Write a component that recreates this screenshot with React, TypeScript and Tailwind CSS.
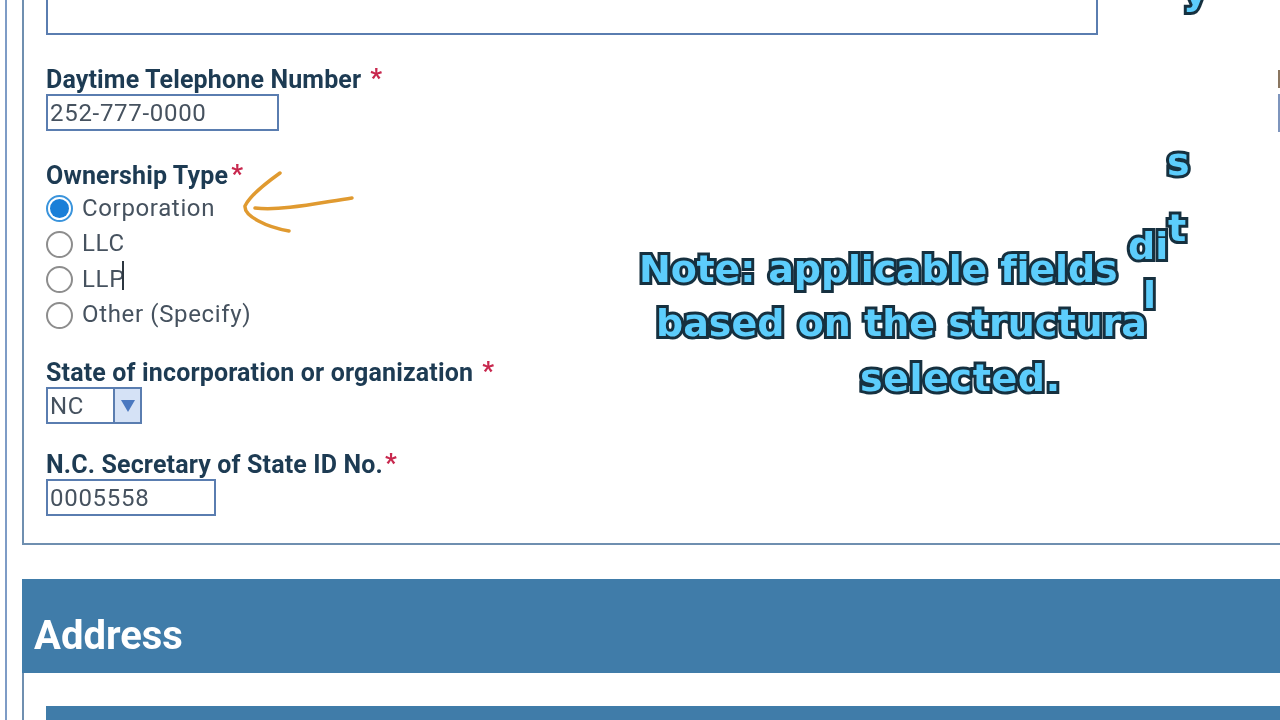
const label = "font-['Roboto',sans-serif] font-bold text-[25px] tracking-[0.15px] leading-[30px] text-[#1d3b53] whitespace-nowrap";
const labelRow = "flex h-[29px]";
const star = "font-['Roboto',sans-serif] font-bold text-[26px] leading-[26px] text-[#c8284e]";
const field = "flex h-[37px] items-center border-2 border-[#5a7db0] bg-white font-['Roboto',sans-serif] text-[24px] tracking-[0.7px] text-[#46525f]";
const overlay =
  "absolute whitespace-nowrap font-['DejaVu_Sans',sans-serif] font-bold text-[38px] leading-none text-[#5ccdfc] [-webkit-text-stroke:6px_#16303f] [paint-order:stroke_fill]";

function Radio({ text, checked, caret }: { text: string; checked?: boolean; caret?: boolean }) {
  return (
    <div className="flex h-[35.5px] items-center gap-[9px]">
      {checked ? (
        <span className="flex h-[27px] w-[27px] items-center justify-center rounded-full border-2 border-[#3a94dc] bg-white">
          <span className="h-[19px] w-[19px] rounded-full bg-[#1a7fd8]" />
        </span>
      ) : (
        <span className="h-[27px] w-[27px] rounded-full border-2 border-[#8d8d8d] bg-white" />
      )}
      <span className="relative pb-[2px] font-['Roboto',sans-serif] text-[24px] tracking-[0.65px] text-[#46525f]">
        {text}
        {caret && <span className="absolute right-[1px] top-[0px] h-[29px] w-[2px] bg-[#2c3640]" />}
      </span>
    </div>
  );
}

export default function App() {
  return (
    <div className="relative h-[720px] w-[1280px] overflow-hidden bg-white blur-[0.4px]">
      <div className="ml-[5px] h-[720px] w-[1300px] border-l-2 border-[#7e9cc6] pl-[15px]">
        <div className="h-[545px] border-b-2 border-l-2 border-[#6f8fb0] pl-[22px]">
          <div className="h-[35px] w-[1052px] border-x-2 border-b-2 border-[#5a7db0]" />

          <div className="mt-[30px] flex">
            <div className="w-[1232px]">
              <div className={labelRow}>
                <span className={label}>Daytime Telephone Number</span>
                <span className={`${star} ml-[9px]`}>*</span>
              </div>
              <div className={`${field} w-[233px] pl-[2px]`}>252-777-0000</div>
            </div>
            <div className="pt-[5px]">
              <div className="h-[18px] w-[3px] bg-[#8a7660]" />
              <div className="mt-[6px] h-[38px] w-[10px] border-2 border-[#7e95bd]" />
            </div>
          </div>

          <div className={`mt-[29px] ${labelRow}`}>
            <span className={label}>Ownership Type</span>
            <span className={`${star} ml-[3px]`}>*</span>
          </div>
          <div className="mt-[1px]">
            <Radio text="Corporation" checked />
            <Radio text="LLC" />
            <Radio text="LLP" caret />
            <Radio text="Other (Specify)" />
          </div>

          <div className={`mt-[25px] ${labelRow}`}>
            <span className={label}>State of incorporation or organization</span>
            <span className={`${star} ml-[9px]`}>*</span>
          </div>
          <div className={`${field} w-[96px]`}>
            <span className="flex-1 pl-[2px]">NC</span>
            <span className="flex h-full w-[27px] items-center justify-center border-l-2 border-[#5a7db0] bg-[#d5e2f6]">
              <svg width="16" height="14" viewBox="0 0 16 14">
                <path d="M1 1 H15 L8 13 Z" fill="#4a78c0" />
              </svg>
            </span>
          </div>

          <div className={`mt-[26px] ${labelRow}`}>
            <span className={label}>N.C. Secretary of State ID No.</span>
            <span className={`${star} ml-[2px]`}>*</span>
          </div>
          <div className={`${field} w-[170px] pl-[2px]`}>0005558</div>
        </div>

        <div className="mt-[34px] border-l-2 border-[#6f8fb0]">
          <div className="-ml-[2px] flex h-[94px] items-center bg-[#407ca9] pl-[12px] pt-[20px] font-['Roboto',sans-serif] text-[40px] font-bold text-white">
            Address
          </div>
          <div className="ml-[22px] mt-[33px] h-[20px] bg-[#407ca9]" />
        </div>
      </div>

      <svg className="absolute left-[240px] top-[165px]" width="120" height="72" viewBox="0 0 120 72" fill="none">
        <path
          d="M40 8 C26 18 10 30 5 41 C4 51 26 62 49 66"
          stroke="#e09a30"
          strokeWidth="3.5"
          strokeLinecap="round"
        />
        <path
          d="M15 43 C42 46 78 38 112 33"
          stroke="#e09a30"
          strokeWidth="3.5"
          strokeLinecap="round"
        />
      </svg>

      {/* caption overlay, its letters are scattered like the video's animation */}
      <div className={`${overlay} left-[639px] top-[250px] tracking-[-0.15px]`}>Note: applicable fields</div>
      <div className={`${overlay} left-[656px] top-[304px]`}>based on the structura</div>
      <div className={`${overlay} left-[860px] top-[359px] tracking-[0.6px]`}>selected.</div>
      <div className={`${overlay} left-[1167px] top-[143px]`}>s</div>
      <div className={`${overlay} left-[1168px] top-[209px]`}>t</div>
      <div className={`${overlay} left-[1128px] top-[227px]`}>di</div>
      <div className={`${overlay} left-[1143px] top-[276px]`}>l</div>
      <div className={`${overlay} left-[1183px] top-[-28px]`}>y</div>
    </div>
  );
}
